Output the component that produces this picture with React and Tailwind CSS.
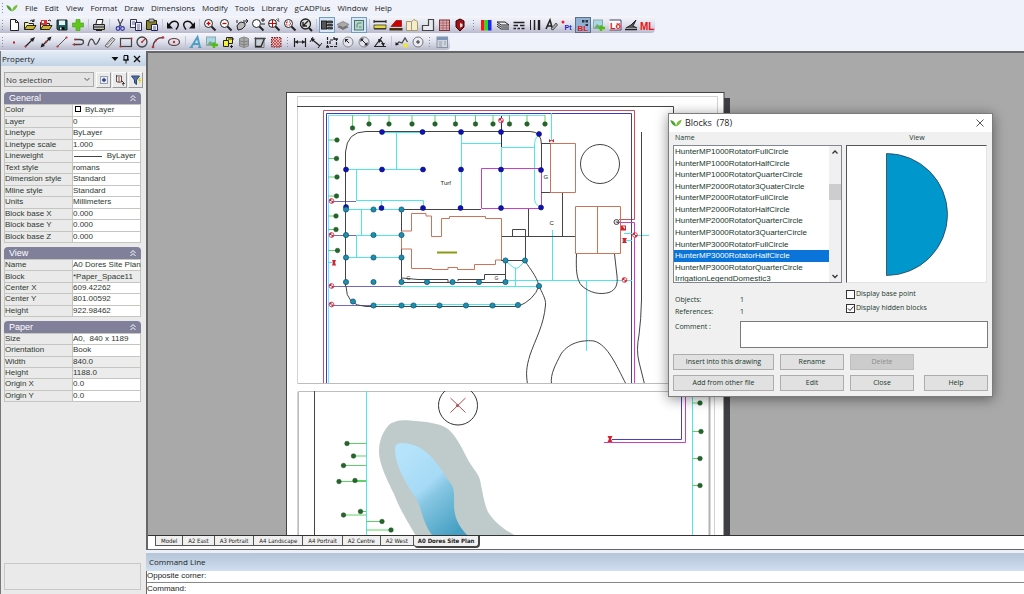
import React from "react";

const K = "#222";

/* ---------- toolbar icons, each drawn in a 16 x 16 box ---------- */
const lens = (
  <>
    <circle cx="6.5" cy="6.5" r="4" fill="#fff" stroke={K} />
    <path d="M9.5 9.5L13.5 13.5" stroke={K} strokeWidth="2" />
  </>
);
const folder = (
  <>
    <path d="M2.5 12.5V5.5H6L7 6.5H11.5V8.5" fill="#f7f0a0" stroke={K} />
    <path d="M2.5 12.5L5 8.5H14L11.5 12.5Z" fill="#c9b62a" stroke={K} />
  </>
);
const icons = {
  new: <path d="M4.5 2.500H9.500L12.500 5.500V13.500H4.500ZM9.500 2.500V5.500H12.500" fill="#fff" stroke={K} />,
  open: <>{folder}<path d="M8 4Q10 2 12 4M12 2V4.500H10" fill="none" stroke={K} /></>,
  openRecent: <>{folder}<path d="M3 3H9V8H3Z" fill="#d33" /><path d="M4 4H6V6H4Z" fill="#fff" /><path d="M10 4Q11 2 13 4" fill="none" stroke={K} /></>,
  save: <><path d="M3 3H13V13H4L3 12Z" fill="#176060" stroke={K} /><rect x="5" y="3.500" width="6" height="4.500" fill="#e8f4f4" /><rect x="5.500" y="10" width="5" height="3" fill="#111" /><rect x="6" y="10.500" width="1.500" height="2" fill="#fff" /></>,
  plus: <path d="M6 2.500H10V6H13.500V10H10V13.500H6V10H2.500V6H6Z" fill="#62c61c" stroke="#3fa010" strokeWidth=".6" />,
  print: <><path d="M5 7L6 2.500H12L11 7" fill="#fff" stroke={K} /><path d="M2.500 7.500H13.500V12.500H2.500Z" fill="#b8b8b8" stroke={K} /><path d="M3 10H13M5 13.500H11" stroke={K} /><rect x="9" y="11" width="2" height="1" fill="#dd3" /></>,
  cut: <><path d="M6 2L9 9.500M11 2L7 9.500" stroke="#445" strokeWidth="1.200" /><circle cx="6" cy="11.500" r="1.800" fill="none" stroke="#33a" strokeWidth="1.200" /><circle cx="10.500" cy="11.500" r="1.800" fill="none" stroke="#33a" strokeWidth="1.200" /></>,
  copy: <><path d="M2.500 2.500H8.500V10.500H2.500Z" fill="#eef" stroke="#334" /><path d="M7.500 5.500H13.500V13.500H7.500Z" fill="#eef" stroke="#226" /><path d="M4 5H7M4 7H7M9 8H12M9 10H12M9 12H12" stroke="#446" strokeWidth=".8" /></>,
  paste: <><path d="M2.500 3.500H12.500V12.500H2.500Z" fill="#8a8522" stroke={K} /><path d="M5 2H10V5H5Z" fill="#bbb" stroke={K} strokeWidth=".7" /><path d="M7.500 7.500H13.500V13.500H7.500Z" fill="#eef" stroke="#226" /><path d="M9 10H12M9 12H12" stroke="#226" strokeWidth=".7" /></>,
  undo: <><path d="M4 9C5 5 9 3 12 5C14.500 7 13 10 11 12.500" fill="none" stroke="#111" strokeWidth="1.500" /><path d="M2 5V11.500H8Z" fill="#111" /></>,
  redo: <><path d="M12 9C11 5 7 3 4 5C1.500 7 3 10 5 12.500" fill="none" stroke="#111" strokeWidth="1.500" /><path d="M14 5V11.500H8Z" fill="#111" /></>,
  zoomIn: <>{lens}<path d="M4.500 6.500H8.500M6.500 4.500V8.500" stroke="#c00" strokeWidth="1.300" /></>,
  zoomOut: <>{lens}<path d="M4.500 6.500H8.500" stroke="#c00" strokeWidth="1.300" /></>,
  pan: <><path d="M3 9L5 6L7 5L11 6V9L8 12L4 13Z" fill="#bbb" stroke={K} /><path d="M9 4H14M12 2L14 4L12 6M3 3V6" fill="none" stroke={K} /></>,
  zoomDyn: <>{lens}<path d="M11 3H15M13 1V5M11 7H15" stroke={K} /></>,
  zoomExt: <>{lens}<path d="M3 6.500H10M6.500 3V10" stroke="#c00" /><path d="M10 2L12 4M12 1L13 5" stroke={K} strokeWidth=".7" /></>,
  zoomWin: <>{lens}<path d="M4.500 5H8.500V8H4.500Z" fill="none" stroke="#c33" strokeDasharray="1.500 1" /></>,
  zoomPrev: <><circle cx="7.500" cy="7" r="5" fill="#ddd" stroke={K} strokeWidth="1.300" /><path d="M11 11L14 14" stroke={K} strokeWidth="2" /><path d="M5 9L10 4M5 5V9H9" stroke={K} fill="none" strokeWidth="1.400" /></>,
  panel: <><rect x="2.500" y="4" width="5" height="8" fill="#555" stroke={K} /><path d="M8.500 4H13.500V6H8.500ZM8.500 7.500H13.500V9H8.500ZM8.500 10.500H13.500V12H8.500Z" fill="#555" stroke={K} strokeWidth=".8" /></>,
  stack: <><path d="M2 10L8 7L14 10L8 13Z" fill="#777" /><path d="M2 7.500L8 4.500L14 7.500L8 10.500Z" fill="#aaa" stroke="#666" strokeWidth=".6" /></>,
  viewport: <><rect x="3.500" y="3.500" width="9" height="9.500" fill="#b9d3d0" stroke="#476" /><path d="M6 10.500V8Q6 6 8 6H10.500M8 10H10.500" fill="none" stroke="#587" /></>,
  dist: <><path d="M2 4.500H14" stroke={K} strokeWidth="1.500" /><path d="M2 3V6M14 3V6" stroke={K} /><rect x="2" y="8" width="12" height="3.500" fill="#e6d93c" stroke={K} strokeWidth=".7" /><path d="M2 12H14" stroke={K} /></>,
  area: <><path d="M3 9.500L8 3.500H13.500V9.500Z" fill="#c00" stroke="#700" strokeWidth=".6" /><rect x="1.500" y="11" width="13" height="2.500" fill="#403010" /></>,
  book: <path d="M2.500 4.500H7.500V13.500H2.500ZM7.500 4.500L10 2.500L13.500 4.500V13.500H7.500Z" fill="#f5eccb" stroke="#a59b70" />,
  ell: <path d="M8.500 2.500H13.500V13.500H2.500V8.500H8.500Z" fill="#e8e8f0" stroke="#444" strokeWidth="1.200" />,
  table: <><rect x="3.500" y="3" width="10" height="10.500" fill="#dba8b0" stroke="#733" /><path d="M3.500 6H13.500M3.500 8.500H13.500M3.500 11H13.500M7 3V13.500M10.500 3V13.500" stroke="#844" strokeWidth=".5" /></>,
  shield: <><path d="M4 4L8 2L12 4V10L8 14L4 10Z" fill="#a01418" stroke="#300" /><path d="M8 6L10.500 7V9.500L8 10.500Z" fill="#ddd" /></>,
  rgb: <><rect x="2" y="3" width="3.500" height="10.500" fill="#f11" /><rect x="5.500" y="3" width="3.500" height="10.500" fill="#2d2" /><rect x="9" y="3" width="3.500" height="10.500" fill="#22e" /></>,
  layers: <><path d="M2 5H10L14 8H6ZM2 7L6 10H14M2 9L6 12H14" fill="#eee" stroke={K} /></>,
  ltype: <path d="M2.500 5.500H13.500M2.500 8.500H7M9 8.500H13.500M2.500 11.500H5M6.500 11.500H9M10.500 11.500H13.500" stroke={K} strokeWidth="1.400" />,
  lweight: <><path d="M3.500 3V13" stroke={K} /><path d="M7.500 3V13" stroke={K} strokeWidth="1.500" /><path d="M12 3V13" stroke={K} strokeWidth="2.400" /></>,
  textStyle: <><path d="M3 12L7 3L9.500 12M4 9H9" stroke={K} fill="none" strokeWidth="1.500" /><path d="M8 12L13 6L14.500 8L10 13Z" fill="#aaa" stroke="#555" /></>,
  point: <><circle cx="4" cy="5" r="1.500" fill="#e22" /><text x="5.500" y="13" fontSize="7" fontWeight="bold" fill="#22c">Pt</text></>,
  block: <><path d="M7 3H9.500V5.500H7ZM10.500 3H13V5.500H10.500ZM10.500 7H13V9H10.500Z" fill="#333" /><text x="2.500" y="13.500" fontSize="8" fontWeight="bold" fill="#e11">BL</text></>,
  insertImg: <><rect x="2.500" y="3" width="9" height="8.500" fill="#a9d9e8" stroke="#8aa" /><path d="M3 11L6 7L9 9L11 8V11Z" fill="#7a7" /><path d="M10 8.500V14M7.500 11H14" stroke="#4ebd10" strokeWidth="2.400" /></>,
  lo: <><path d="M2.500 3H14V13H2.500" fill="#fff" stroke="#446" /><text x="3" y="12" fontSize="9" fontWeight="bold" fill="#e11">Lö</text></>,
  dimStyle: <><path d="M2 12.500H14" stroke={K} strokeWidth="1.500" /><path d="M3 11L8 8L13 3L10 9L14 11" fill="#555" stroke={K} /></>,
  ml: <text x="1" y="12.500" fontSize="10" fontWeight="bold" fill="#e11">ML</text>,
  dot: <rect x="7" y="7.500" width="2" height="2" fill="#b22" />,
  ray: <><path d="M3 13L10 6" stroke={K} strokeWidth="1.200" /><path d="M8 5L13 3L11 8Z" fill={K} /><circle cx="3.500" cy="12.500" r="1" fill="#b33" /></>,
  xline: <><path d="M4 12L12 4" stroke={K} strokeWidth="1.200" /><path d="M9 4L13.500 2.500L12 7ZM7 12L2.500 13.500L4 9Z" fill={K} /><circle cx="8" cy="8" r="1.200" fill="#b33" /></>,
  line: <><path d="M3.500 12.500L12.500 3.500" stroke="#555" /><circle cx="3.500" cy="12.500" r="1.100" fill="#b33" /><circle cx="12.500" cy="3.500" r="1.100" fill="#b33" /></>,
  pline: <><path d="M5 5.500H10Q13.500 5.500 13.500 8T10 10.500H4" fill="none" stroke="#444" strokeWidth="1.300" /><circle cx="5" cy="5.500" r="1" fill="#b33" /><path d="M2 10.500L5 9V12Z" fill="#b33" /></>,
  spline: <path d="M2 12C4 3 6.500 4 8 8S11 11 14 4" fill="none" stroke="#444" strokeWidth="1.200" />,
  mline: <><path d="M3 12L10 3.500L13 5.500L6 13.500Z" fill="#d8d8d8" stroke="#666" /><path d="M5 11L11 5" stroke="#777" strokeDasharray="1 1" /></>,
  rect: <><rect x="2.500" y="4.500" width="11" height="8" fill="none" stroke="#444" strokeWidth="1.200" /><circle cx="2.500" cy="12.500" r="1" fill="#b33" /><circle cx="13.500" cy="4.500" r="1" fill="#b33" /></>,
  circle: <><circle cx="8" cy="8" r="5" fill="none" stroke="#444" strokeWidth="1.300" /><path d="M8 8L11 5" stroke="#b33" strokeWidth="1.300" /><circle cx="8" cy="8" r="1" fill="#b33" /></>,
  arc: <><path d="M3 13.500C3.500 7 7 3.500 13 3.500" fill="none" stroke="#5a3a3a" strokeWidth="1.400" /><circle cx="3" cy="13" r="1.300" fill="#b33" /><circle cx="13" cy="3.500" r="1.300" fill="#b33" /><circle cx="6" cy="6.500" r="1.100" fill="#b33" /></>,
  ellipse: <><ellipse cx="8" cy="8" rx="5.500" ry="3.500" fill="none" stroke="#5a3a3a" strokeWidth="1.200" /><circle cx="8" cy="8" r="1.200" fill="#b33" /></>,
  text: <><path d="M3 13.500L9.500 3L12 13.500M6 10H11" fill="none" stroke="#4f9fc4" strokeWidth="2" /><path d="M1.500 13.500H5M10 13.500H13.500" stroke="#4f9fc4" /></>,
  shapes: <><path d="M6.500 3.500H12.500V9.500H6.500Z" fill="#f2f23c" stroke={K} /><path d="M3.500 6.500H8.500V12.500H3.500Z" fill="#f2f23c" stroke={K} /><path d="M10 12.500H13M11.500 11V14M8 5H14" stroke={K} /></>,
  mesh: <><path d="M3.500 4.500L8 3L12.500 4.500V12L8 13.500L3.500 12Z" fill="#aaa" stroke="#888" /><path d="M3.500 7L8 8L12.500 7M3.500 9.500L8 11L12.500 9.500M8 4V13" fill="none" stroke="#777" strokeWidth=".8" /></>,
  region: <><path d="M3.500 4.500H12.500L9 12.500H3.500Z" fill="#c8d0d8" stroke={K} strokeWidth="1.300" /><path d="M2 4.500H14M3.500 3V13.500M12 5V13.500H3" stroke="#555" fill="none" strokeWidth=".7" /></>,
  hatch: <><rect x="3.500" y="3.500" width="9.500" height="9.500" fill="#e7b7b7" stroke="#622" strokeDasharray="1.500 1" /><path d="M4 7L7 4M4 10L10 4M4 13L13 4M7 13L13 7M10 13L13 10M4 10L7 13M4 7L10 13M4 4L13 13M7 4L13 10" stroke="#a22" strokeWidth=".6" /></>,
  dimLin: <><path d="M2.500 4V13M13.500 4V13M3 8H13" stroke={K} strokeWidth="1.200" /><path d="M3 8L6 6V10ZM13 8L10 6V10Z" fill={K} /></>,
  dimAli: <><path d="M3.500 5L12 12" stroke={K} strokeWidth="1.300" /><path d="M2 8L5 3M10 14L14 9" stroke={K} /><path d="M3 4L7 5L4 8Z" fill={K} /></>,
  dimOrd: <><path d="M3.500 3V12.500H12.500V5M6 10V6H10V3" fill="none" stroke={K} strokeWidth="1.200" strokeDasharray="3 1" /><path d="M10 5H14M2 13H5" stroke={K} strokeWidth="1.500" /></>,
  dimRad: <><circle cx="8" cy="8" r="5" fill="#e4e4ee" stroke="#888" /><path d="M5 5H8.500L5 8.500Z" fill={K} /><path d="M5 5L9 9" stroke={K} /></>,
  dimDia: <><circle cx="8" cy="8" r="5" fill="#e4e4ee" stroke="#888" /><path d="M4.500 4.500H8L4.500 8ZM11.500 11.500H8L11.500 8Z" fill={K} /><path d="M5 5L11 11" stroke={K} /></>,
  dimAng: <><path d="M2 12.500H14M3 12L10 3" stroke={K} strokeWidth="1.200" /><path d="M7 6Q11 7 11.500 12" fill="none" stroke={K} strokeWidth="1.200" /><path d="M6 5L10 6L7 9ZM9 9H13L11.500 12Z" fill={K} /></>,
  leader: <><path d="M2 11L5 8L8 9L11 4L13.500 8" fill="none" stroke="#444" strokeWidth="1.200" /><path d="M1.500 11.500V8L5 10.500Z" fill={K} /><circle cx="11.500" cy="11.500" r="2.300" fill="#eee43a" /></>,
  center: <><circle cx="8" cy="8" r="5" fill="#ececf4" stroke="#777" /><path d="M6 8H10M8 6V10" stroke="#333" /></>,
  props: <><rect x="3" y="3" width="10.500" height="10.500" fill="#cfd5de" stroke="#8a93a3" /><rect x="3" y="3" width="10.500" height="3" fill="#7d96b8" /><path d="M5 8H8M5 10H8M5 12H8M10 8H12M10 10H12" stroke="#99a" /></>,
};

const row1 = [
  ["new", "New"], ["open", "Open"], ["openRecent", "Open recent"], ["save", "Save"], ["plus", "Add"], "|",
  ["print", "Print"], "|", ["cut", "Cut"], ["copy", "Copy"], ["paste", "Paste"], "|", ["undo", "Undo"], ["redo", "Redo"], "|",
  ["zoomIn", "Zoom in"], ["zoomOut", "Zoom out"], ["pan", "Pan"], ["zoomDyn", "Dynamic zoom"], ["zoomExt", "Zoom extents"], ["zoomWin", "Zoom window"], ["zoomPrev", "Zoom previous"], "|",
  ["panel", "Property panel", 1], ["stack", "Draw order"], ["viewport", "Viewport", 1], "|",
  ["dist", "Distance"], ["area", "Area"], ["book", "Library"], ["ell", "Outline"], ["table", "Table"], ["shield", "Audit"], ":",
  ["rgb", "Colors"], ["layers", "Layers"], ["ltype", "Linetypes"], ["lweight", "Lineweights"], ["textStyle", "Text styles"], ["point", "Point style"],
  ["block", "Blocks", 2], ["insertImg", "Images"], ["lo", "Layouts"], ["dimStyle", "Dimension styles"], ["ml", "Mline styles"],
];
const row2 = [
  ["dot", "Point"], ["ray", "Ray"], ["xline", "Construction line"], ["line", "Line"], ["pline", "Polyline"], ["spline", "Spline"], ["mline", "Mline"],
  ["rect", "Rectangle"], ["circle", "Circle"], ["arc", "Arc"], ["ellipse", "Ellipse"], "|",
  ["text", "Text"], ["insertImg", "Insert image"], ["shapes", "Insert block"], ["mesh", "Mesh"], ["region", "Region"], ["hatch", "Hatch"], ":",
  ["dimLin", "Linear dimension"], ["dimAli", "Aligned dimension"], ["dimOrd", "Ordinate dimension"], ["dimRad", "Radius dimension"], ["dimDia", "Diameter dimension"], ["dimAng", "Angular dimension"], "|",
  ["leader", "Leader"], ["center", "Center mark"], ":", ["props", "Properties"],
];
const pressed = [
  "",
  "bg-[#d9e5f2] outline outline-1 -outline-offset-1 outline-[#6f9cc8]",
  "bg-[#8fb2d6] outline outline-1 -outline-offset-1 outline-[#5b6f86]",
];

function Grip() {
  return (
    <svg className="h-3 w-1.5 shrink-0" viewBox="0 0 6 12" aria-hidden="true">
      <path d="M2.5 1V12" stroke="#8a8ca0" strokeDasharray="1 2" />
    </svg>
  );
}

function Toolbar({ label, items, sep, grip }) {
  return (
    <div role="toolbar" aria-label={label} className="flex h-[17px] w-fit items-center rounded-r bg-gradient-to-b from-[#f6f7fc] via-[#dfe1ed] to-[#b9bbcd]">
      <Grip />
      {items.map((it, i) =>
        it === "|" ? (
          <span key={i} className={`flex justify-center ${sep}`}><span className="h-3 w-px bg-[#c3c5d4]" /></span>
        ) : it === ":" ? (
          <span key={i} className={`flex justify-center ${grip}`}><Grip /></span>
        ) : (
          <button key={i} type="button" aria-label={it[1]} className={`h-4 w-4 shrink-0 ${pressed[it[2] || 0]}`}>
            <svg className="block h-4 w-4" viewBox="0 0 16 16" fontFamily="Liberation Sans, sans-serif">{icons[it[0]]}</svg>
          </button>
        )
      )}
    </div>
  );
}

function Leaf() {
  return (
    <svg className="h-2 w-3 shrink-0" viewBox="0 0 12 8" aria-hidden="true">
      <path d="M6 7.500C5.500 3.500 3.500 1.500 .3 1C1 4.500 3 6.500 6 7.500Z" fill="#4f9f2f" />
      <path d="M6 7.500C6.500 3 8.500 1.500 11.700 .8C11 4.500 9 6.500 6 7.500Z" fill="#7cbf3f" />
    </svg>
  );
}

/* ---------- property panel ---------- */
const swatch = <span className="mr-1 ml-0.5 inline-block h-1.5 w-1.5 border border-black" />;
const groups = [
  ["General", "h-[139px]", [
    ["Color", <>{swatch}ByLayer</>], ["Layer", "0"], ["Linetype", "ByLayer"], ["Linetype scale", "1.000"],
    ["Lineweight", <span className="flex items-center justify-between pr-1 pl-px"><span className="h-px w-7 bg-[#444]" />ByLayer</span>],
    ["Text style", "romans"], ["Dimension style", "Standard"], ["Mline style", "Standard"], ["Units", "Millimeters"],
    ["Block base X", "0.000"], ["Block base Y", "0.000"], ["Block base Z", "0.000"],
  ]],
  ["View", "h-[58px]", [
    ["Name", "A0 Dores Site Plan"], ["Block", "*Paper_Space11", 1], ["Center X", "609.42262"], ["Center Y", "801.00592"], ["Height", "922.98462"],
  ]],
  ["Paper", "h-[69px]", [
    ["Size", "A0,  840 x 1189"], ["Orientation", "Book"], ["Width", "840.0", 1], ["Height", "1188.0", 1], ["Origin X", "0.0"], ["Origin Y", "0.0"],
  ]],
];

function PropertyPanel() {
  const small = "flex h-4 w-[15px] items-center justify-center border border-[#fafafa] border-r-[#9a9a9a] border-b-[#9a9a9a]";
  return (
    <aside aria-label="Property" className="flex w-[146px] shrink-0 flex-col border-l border-[#777] bg-[#ebeaea]">
      <header className="flex h-[15px] items-center bg-gradient-to-b from-[#e4edf7] to-[#c3d3e5] pr-1 pl-px text-[#222]">
        <h2 className="mr-auto">Property</h2>
        <button type="button" aria-label="Panel menu"><svg className="block h-2.5 w-2.5" viewBox="0 0 10 10"><path d="M1.500 3H8.500L5 7Z" fill="#111" /></svg></button>
        <button type="button" aria-label="Pin"><svg className="block h-2.5 w-3" viewBox="0 0 12 10"><path d="M4 1.500H8V6H4ZM7.500 1.500V6M3 6H9M6 6V9.500" fill="none" stroke="#111" /></svg></button>
        <button type="button" aria-label="Close panel"><svg className="block h-2.5 w-2.5" viewBox="0 0 10 10"><path d="M2 2L8 8M8 2L2 8" stroke="#111" strokeWidth="1.400" /></svg></button>
      </header>
      <div className="flex h-[26px] items-center gap-px pt-px pl-[3px]">
        <div className="relative mr-px w-[90px]">
          <select aria-label="Selection" className="block h-[15px] w-full appearance-none border border-[#aaa] bg-[#e4e4e4] px-px text-[#333]">
            <option>No selection</option>
          </select>
          <svg className="pointer-events-none absolute top-[5px] right-[3px] h-[5px] w-2" viewBox="0 0 8 5"><path d="M1.500 1L4 3.500L6.500 1" fill="none" stroke="#555" /></svg>
        </div>
        <button type="button" aria-label="Quick select" className={small}>
          <svg className="h-3 w-3" viewBox="0 0 12 12"><rect x="2.500" y="2.500" width="7" height="7" fill="#e2e9f4" stroke="#557" strokeDasharray="1 1" /><path d="M4 6H8M6 4V8" stroke="#223a77" strokeWidth="1.300" /></svg>
        </button>
        <button type="button" aria-label="Pick objects" className={small}>
          <svg className="h-3 w-3" viewBox="0 0 12 12"><path d="M2.500 1V8M2.500 2H7.500V8H3" fill="#eee" stroke="#555" /><path d="M5 3V9" stroke="#b44" /><path d="M7 6L10.500 9.500H8.500L9.500 11.500" fill="none" stroke="#333" /></svg>
        </button>
        <button type="button" aria-label="Filter" className={small}>
          <svg className="h-3 w-3" viewBox="0 0 12 12"><path d="M1.500 2H9.500L6.500 6V10.500L4.500 9V6Z" fill="#4b6fa8" stroke="#2c4672" /><path d="M9 4L8 7H9.500L8.500 10.500L11.500 6H10L11 4Z" fill="#e6d21e" /></svg>
        </button>
      </div>
      <div className="flex flex-col gap-1 pr-[5px] pl-[3px] font-['Liberation_Sans',Arial,sans-serif] text-[#2d382f]">
        {groups.map(([name, height, rows]) => (
          <section key={name}>
            <button type="button" className="flex h-3 w-full items-center justify-between rounded-t bg-[#80809a] pr-1 pl-[5px] text-[9px] leading-3 text-white">
              {name}
              <svg className="h-2 w-2" viewBox="0 0 8 8"><path d="M1.500 4L4 1.500L6.500 4M1.500 7L4 4.500L6.500 7" fill="none" stroke="#fff" /></svg>
            </button>
            <table className={`w-full table-fixed border-collapse leading-[10px] ${height}`}>
              <tbody>
                {rows.map(([k, v, grey]) => (
                  <tr key={k}>
                    <th scope="row" className="border border-[#c6c6c0] p-0 text-left font-normal">{k}</th>
                    <td className={`border border-[#c6c6c0] p-0 whitespace-pre ${grey ? "bg-[#ececec]" : "bg-white"}`}>{v}</td>
                  </tr>
                ))}
              </tbody>
            </table>
          </section>
        ))}
      </div>
      <div className="mt-auto mr-[5px] mb-1 ml-[3px] h-[27px] border border-[#c8c8c8]" />
    </aside>
  );
}

/* ---------- site plan ---------- */
const blueDots = [[382,132],[422.5,132],[461,132],[501,132],[539,134],[346,169.5],[382,169.5],[423,169.5],[461,169.5],[501,169.5],[541,170],[346,207],[381.5,208],[423,208],[460.5,208],[501,208],[541,207.5]];
const tealDots = [[346,209.5],[373.5,209.5],[401.5,209.5],[346,235],[373.5,235],[401.5,235],[346,257.5],[373.5,257.5],[401.5,257.5],[346,282],[373.5,282],[401.5,282],[427,282],[452.5,282],[479,282],[505.5,282],[505.5,260.5],[525,260.5],[539,286],[518,305],[353,301.5],[373.5,305.5],[401.5,305.5],[413.5,305.5],[439.5,305.5],[466,305.5],[492.5,305.5]];
const shrubs = [
  [352.5,128,352.5,115],[369,124,369,115],[389,124,389,115],[412,124,412,115],[435,124,435,115],[455.5,124,455.5,115],[475.5,124,475.5,115],[493,124,493,115],[509.5,124,509.5,115],[527,124,527,115],[545,124,545,115],
  [337,140,328,140],[336.5,158.5,328,158.5],[337,177,328,177],[336.5,196,328,196],[336,216,328,216],[336,229.5,328,229.5],[337.5,250.5,328,250.5],
  [347,443.5,366,443.5],[353.5,456,366,456],[343.5,465.5,366,465.5],[339,481.5,366,481.5],[355,480.5,366,480.5],[343.5,515,366,515],[360.5,511.5,366,511.5],[382,521.5,366,521.5],[391,530,366,530],
  [700,403,692,403],[701,431.5,692,431.5],[700,458.5,692,458.5],[700,485.5,692,485.5],
];
const valves = [[501,120.5],[331.5,201],[331.5,235],[331.5,286],[331.5,304.5],[635,235],[624.5,280]];

function SitePlan() {
  return (
    <svg className="block h-full w-full bg-[#a9a9a9]" role="img" aria-label="Site plan drawing" fontFamily="Liberation Sans, sans-serif">
      <defs>
        <linearGradient id="water" x1="400" y1="455" x2="462" y2="528" gradientUnits="userSpaceOnUse">
          <stop offset="0" stopColor="#b6e3fc" /><stop offset=".42" stopColor="#a6daf5" /><stop offset=".55" stopColor="#86c6e2" /><stop offset="1" stopColor="#459fc2" />
        </linearGradient>
        <clipPath id="lower"><rect x="298" y="391" width="412" height="160" /></clipPath>
        <clipPath id="upper"><rect x="297" y="106" width="420" height="277" /></clipPath>
      </defs>
      <g transform="translate(-148,-53)" fill="none">
        <rect x="724" y="98" width="6" height="500" fill="#3e3f42" />
        <rect x="286.500" y="92.500" width="437.500" height="500" fill="#fff" stroke="#444" />
        <path d="M297.500 536V391.500M297.500 383V96.500H717.500V383M714.500 391V536" stroke="#d2d2d2" />
        <path d="M297.500 383.500H690M298.500 536V391.500H710" stroke="#bdbdbd" />
        <path d="M709.500 391V536" stroke="#b2b2b2" strokeWidth="2" />
        <path d="M297 106.500H673.500V140" stroke="#444" />

        <g clipPath="url(#upper)">
          <path d="M323.500 384V110.500H634.500V219.500H619" stroke="#c8505a" />
          <path d="M326.500 384V113.500H631.500V384" stroke="#3c3cc0" />
          <path d="M328.500 384V115.500H545" stroke="#70e8f2" />
          <path d="M617 222.500H634.500V384" stroke="#c63fc6" />
          <g stroke="#4fe4ee">
            <path d="M382 132.500H422M396.500 132V169.500M346 169.500H423M356.500 169V200.500H423.500V208M381.500 200V208M461.500 132V208M461 143.500H501M501.500 132V208M501 147.500H534M538 136Q534.500 138 534.500 146V198Q534.500 204 540 207M346 209.500H401M346 235.500H401M361.500 209V235M356.500 235V257.500M346 257.500H401M401 286.500H539M373 304.500H518M551.500 113V141M552.500 230V280M505 280.500H632M586.500 280V351M507 262L514 268H518L524 262M515.500 268V286M624 233.500H632M622 240.500H632M636 235.500H649M328 262.500H334" />
          </g>
          <path d="M332 201.500H356M332 235.500H356M332 286.500H401M332 305.500H376" stroke="#7468b8" />
          <path d="M501.500 116V147" stroke="#25259c" />
          <path d="M345.500 286V152Q347 131.500 366 131.500H530Q541.500 131.500 541.500 145V170" stroke="#444" />
          <path d="M346 286Q346 305.500 366 306.500H518Q534 300 539 286M401.500 209V282.500H505.500V261M401 209.500H481" stroke="#444" />
          <path d="M541.500 169V208.500H481.500V168.500H541" stroke="#c63fc6" />
          <path d="M541 143.500H550.500M541 192.500H550.500M550.500 143V192M528.500 209V236M562.500 193V236M501 236.500H575M512.500 236V229.500H525.500V260.500H501M402 278L418 279.500H448V282M458 281V279.500H484.500V274.500H505M641.500 132V300Q641 320 639 335Q636 350 639 362L644.500 384" stroke="#444" />
          <path d="M401.500 231H411.500V213.500H426V216H431.500V236.500H441.500V218.500H449.500V216.500H485.500V218.500H501.500V260H495.500V264.500H474.500V269.500H457.500V267.500H448V269.500H432V268.500H411.500V249H401.500Z M550.500 143.500H575.500V192.500H550.500Z M575.500 206.500H620.500V253.500H575.500Z M597.500 206V253" stroke="#cf7358" />
          <path d="M525 261C531 270 536 276 538.500 284C542 294 546 298 545.500 305C544 325 535 340 530 355C526 368 526 374 527.500 384M576.500 254C576 268 576 280 582 286C590 293 600 295 609 292.500C616 290 618 284 617 276L614.500 254M551.500 384C550 374 556 364 561 354C570 341 585 340 594 341C608 345 616 365 626 384" stroke="#444" />
          <circle cx="600" cy="164" r="19.500" stroke="#444" />
          <path d="M437 252.500H457" stroke="#8a9a14" strokeWidth="2" />
        </g>
        <g fill="#222" fontSize="6">
          <text x="440.500" y="185">Turf</text>
          <text x="543.500" y="179" fontSize="6">G</text>
          <text x="549.500" y="225" fontSize="6">C</text>
          <text x="406.500" y="280" fontSize="5">G</text>
          <text x="494.500" y="280" fontSize="5">G</text>
        </g>

        <g clipPath="url(#lower)">
          <path d="M379 452C379 440 383 432 388 426C393 420.500 402 420 410 420.500C425 421.500 440 423 448 429C456 436 461 446 466 456C471 467 478 472 480 480C483 494 484 503 488 512C494 522 504 530 520 538H417C407 520 400 510 394 494C388 482 379 464 379 452Z" fill="#bfcbca" />
          <path d="M395 449C395 445 397 443 402 443C412 443.500 420 447 426 452C434 459 441 468 446 477C450 483 453 485 453.500 490C455 498 453 505 455 514C457 523 462 530 470 538H434C428 530 424 522 421.500 512C419 503 416 498 411 491C403 478 395 463 395 449Z" fill="url(#water)" />
          <path d="M314.500 391V540" stroke="#444" />
          <path d="M366.500 391V540M692.500 391V540" stroke="#4fe4ee" />
          <circle cx="458" cy="405.500" r="19.500" stroke="#333" />
          <path d="M450.500 398L465.500 412.500M465.500 398L450.500 412.500" stroke="#b05050" />
          <circle cx="457.500" cy="405.500" r="1.500" fill="#b05050" />
          <path d="M681.500 391V439.500H612" stroke="#4a3fc0" />
          <path d="M685.500 391V442.500H604" stroke="#c63fc6" />
        </g>
        {shrubs.map(([x, y, x2, y2]) => (
          <g key={`${x}-${y}`}>
            <path d={`M${x} ${y}L${x2} ${y2}`} stroke="#5fd267" />
            <circle cx={x} cy={y} r="2.300" fill="#24662a" stroke="#1d4d22" strokeWidth=".5" />
          </g>
        ))}
        {blueDots.map(([x, y]) => <circle key={`${x}-${y}`} cx={x} cy={y} r="2.500" fill="#0e12b8" stroke="#0b0c66" strokeWidth=".6" />)}
        {tealDots.map(([x, y]) => <circle key={`${x}-${y}`} cx={x} cy={y} r="2.600" fill="#1c8fb0" stroke="#114f66" strokeWidth=".7" />)}
        {valves.map(([x, y]) => (
          <g key={`${x}-${y}`}>
            <circle cx={x} cy={y} r="2.400" fill="#fff" stroke="#d22a3a" strokeWidth=".8" />
            <path d={`M${x} ${y}V${y - 2.4}A2.400 2.400 0 0 0 ${x - 2.4} ${y}ZM${x} ${y}V${y + 2.4}A2.400 2.400 0 0 0 ${x + 2.4} ${y}Z`} fill="#d22a3a" />
          </g>
        ))}
        <path d="M549 139L554 142.500V139L549 142.500ZM621 225.500H626V230.500H621ZM622 238H627L625.500 240.500L627 243H622L623.500 240.500ZM332 260H336L335 262.500L336 265.500H332L333 262.500ZM607.500 436H612.500L611 439L612.500 442H607.500L609 439Z" fill="#d8202e" />
        <path d="M622.500 226.500H625V229Z" fill="#fff" />
        <circle cx="616.500" cy="222" r="2.500" stroke="#444" /><circle cx="617" cy="222" r="1" stroke="#444" strokeWidth=".6" />
      </g>
    </svg>
  );
}

/* ---------- blocks dialog ---------- */
const blocks = [
  "HunterMP1000RotatorFullCircle", "HunterMP1000RotatorHalfCircle", "HunterMP1000RotatorQuarterCircle", "HunterMP2000Rotator3QuaterCircle",
  "HunterMP2000RotatorFullCircle", "HunterMP2000RotatorHalfCircle", "HunterMP2000RotatorQuarterCircle", "HunterMP3000Rotator3QuarterCircle",
  "HunterMP3000RotatorFullCircle", "HunterMP3000RotatorHalfCircle", "HunterMP3000RotatorQuarterCircle", "IrrigationLegendDomestic3",
];

function Push({ children, className, disabled }) {
  return (
    <button type="button" disabled={disabled} className={`h-4 border text-center leading-[14px] ${disabled ? "border-[#bfbfbf] bg-[#cccccc] text-[#8d8d8d]" : "border-[#adadad] bg-[#e1e1e1]"} ${className}`}>
      {children}
    </button>
  );
}

function Check({ id, label, on }) {
  return (
    <div className="flex h-3.5 items-center gap-px">
      <span className="relative flex h-[9px] w-[9px]">
        <input id={id} type="checkbox" defaultChecked={on} className="peer h-[9px] w-[9px] appearance-none border border-[#333] bg-white" />
        <svg className="pointer-events-none absolute inset-0 hidden h-[9px] w-[9px] peer-checked:block" viewBox="0 0 9 9"><path d="M2 4.500L4 6.500L7.500 2.500" fill="none" stroke="#222" /></svg>
      </span>
      <label htmlFor={id}>{label}</label>
    </div>
  );
}

function BlocksDialog() {
  return (
    <div role="dialog" aria-labelledby="blocks-title" className="absolute top-[60px] left-[520px] w-[325px] border border-[#7c7c7c] bg-[#f0f0f0] text-[7px] leading-3 text-[#20382c] shadow-[0_2px_12px_rgba(0,0,0,0.45)]">
      <header className="flex h-[18px] items-center gap-[3px] bg-white pl-px">
        <Leaf />
        <h2 id="blocks-title" className="mr-auto text-[9px] whitespace-pre text-[#222]">Blocks  (78)</h2>
        <button type="button" aria-label="Close dialog" className="flex h-full w-6 items-center justify-center">
          <svg className="h-2 w-2" viewBox="0 0 8 8"><path d="M.5 .5L7.500 7.500M7.500 .5L.5 7.500" stroke="#444" strokeWidth=".9" /></svg>
        </button>
      </header>
      <div className="px-1 pb-[5px]">
        <div className="grid grid-cols-[169px_1fr] gap-x-1">
          <span id="list-label" className="h-[13px] pl-0.5">Name</span>
          <span className="h-[13px] text-center">View</span>
          <div className="flex h-[138px] border border-[#82878f] bg-white">
            <div className="flex-1 overflow-hidden">
              <ul role="listbox" aria-labelledby="list-label" className="grid h-[139px] grid-rows-12 font-['Liberation_Sans',Arial,sans-serif] text-[8px]">
                {blocks.map((b, i) => (
                  <li key={b} role="option" aria-selected={i === 9} className={`pl-px ${i === 9 ? "bg-[#0a74d8] text-white" : ""}`}>{b}</li>
                ))}
              </ul>
            </div>
            <div className="flex w-3 flex-col items-center bg-[#f0f0f0]" aria-hidden="true">
              <svg className="h-3 w-2" viewBox="0 0 8 12"><path d="M1.500 7.500L4 5L6.500 7.500" fill="none" stroke="#333" strokeWidth="1.300" /></svg>
              <span className="mt-[26px] h-4 w-full bg-[#cdcdcd]" />
              <svg className="mt-auto h-3 w-2" viewBox="0 0 8 12"><path d="M1.500 5L4 7.500L6.500 5" fill="none" stroke="#333" strokeWidth="1.300" /></svg>
            </div>
          </div>
          <div className="mr-px h-[138px] border border-[#e4e4e4] border-t-[#555] border-l-[#555] bg-white">
            <svg className="h-full w-full" viewBox="0 0 139 136" role="img" aria-label="Block preview">
              <path d="M39.500 7.500A61 61 0 0 1 39.500 129.500Z" fill="#0098cc" stroke="#2a3c55" strokeWidth=".8" />
            </svg>
          </div>
          <dl className="grid grid-cols-[65px_1fr] content-start pt-[11px] pl-0.5">
            <dt>Objects:</dt><dd>1</dd>
            <dt>References:</dt><dd>1</dd>
          </dl>
          <div className="pt-1">
            <Check id="base-point" label="Display base point" />
            <Check id="hidden-blocks" label="Display hidden blocks" on />
          </div>
        </div>
        <div className="mt-[3px] flex pl-0.5">
          <label htmlFor="comment" className="w-[65px]">Comment :</label>
          <textarea id="comment" className="block h-[27px] flex-1 resize-none border border-[#7a7a7a] bg-white" />
        </div>
        <div className="mt-1.5 flex gap-1.5">
          <Push className="w-[101px]">Insert into this drawing</Push>
          <Push className="w-16">Rename</Push>
          <Push className="w-16" disabled>Delete</Push>
        </div>
        <div className="mt-[5px] flex gap-1.5">
          <Push className="w-[101px]">Add from other file</Push>
          <Push className="w-16">Edit</Push>
          <Push className="w-16">Close</Push>
          <Push className="ml-auto w-16">Help</Push>
        </div>
      </div>
    </div>
  );
}

const menus = ["File", "Edit", "View", "Format", "Draw", "Dimensions", "Modify", "Tools", "Library", "gCADPlus", "Window", "Help"];
const tabs = ["Model", "A2 East", "A3 Portrait", "A4 Landscape", "A4 Portrait", "A2 Centre", "A2 West"];

export default function App() {
  return (
    <div className="flex h-screen flex-col overflow-hidden bg-[#eff2fb] font-['Open_Sans','Noto_Sans',sans-serif] text-[8px] leading-3 text-[#222]">
      <nav aria-label="Main menu" className="flex h-4 items-center">
        <Grip />
        <Leaf />
        <div className="ml-[7px] flex gap-[7px]">
          {menus.map((m) => <button key={m} type="button">{m}</button>)}
        </div>
      </nav>
      <Toolbar label="Standard" items={row1} sep="w-[5px]" grip="w-[11px]" />
      <Toolbar label="Draw" items={row2} sep="w-1.5" grip="w-2" />
      <div className="mt-px flex min-h-0 flex-1">
        <PropertyPanel />
        <div className="flex min-w-0 flex-1 flex-col bg-[#eceff7]">
          <main className="flex min-h-0 flex-1 flex-col border-t-2 border-b border-l-2 border-[#666]">
            <div className="relative min-h-0 flex-1">
              <SitePlan />
              <BlocksDialog />
            </div>
            <div role="tablist" aria-label="Layouts" className="flex h-3.5 shrink-0 items-start border-t border-[#333] bg-white pl-[7px] font-['DejaVu_Sans_Condensed','DejaVu_Sans',sans-serif] text-[6px]">
              {tabs.map((t) => (
                <button key={t} type="button" role="tab" className="-ml-px h-2.5 border-r border-b border-l border-[#555] bg-[#f0f0f0] px-[5px] leading-[9px] first:ml-0">{t}</button>
              ))}
              <button type="button" role="tab" aria-selected="true" className="h-3 rounded-b border-r-2 border-b-2 border-[#444] bg-[#f0f0f0] px-1 font-bold leading-[10px]">A0 Dores Site Plan</button>
            </div>
          </main>
          <section aria-label="Command Line" className="mt-[3px] shrink-0">
            <h2 className="flex h-[18px] items-center bg-gradient-to-b from-[#b5c5d8] to-[#cfdef0] pl-[3px]">Command Line</h2>
            <div className="border-l border-[#666] bg-white font-['Liberation_Sans',Arial,sans-serif]">
              <p className="h-3 border-b border-[#888] leading-[10px]">Opposite corner:</p>
              <div className="flex h-[11px] items-center">
                <label htmlFor="command">Command:</label>
                <input id="command" className="h-2.5 flex-1 outline-none" />
              </div>
            </div>
          </section>
        </div>
      </div>
    </div>
  );
}
